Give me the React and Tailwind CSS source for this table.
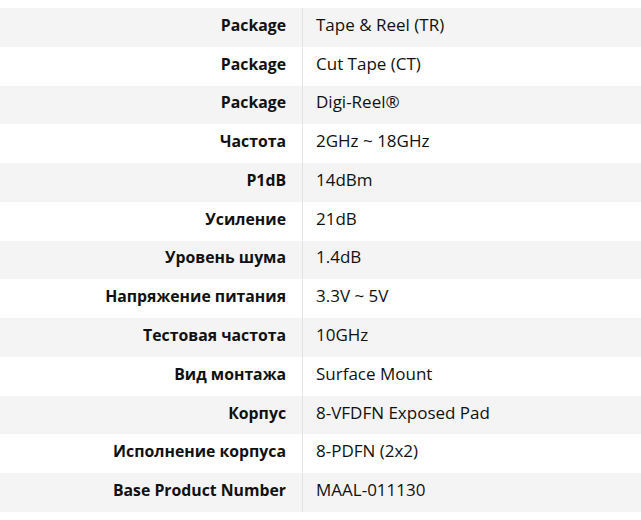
const rows = [
  ["Package", "Tape & Reel (TR)"],
  ["Package", "Cut Tape (CT)"],
  ["Package", "Digi-Reel®"],
  ["Частота", "2GHz ~ 18GHz"],
  ["P1dB", "14dBm"],
  ["Усиление", "21dB"],
  ["Уровень шума", "1.4dB"],
  ["Напряжение питания", "3.3V ~ 5V"],
  ["Тестовая частота", "10GHz"],
  ["Вид монтажа", "Surface Mount"],
  ["Корпус", "8-VFDFN Exposed Pad"],
  ["Исполнение корпуса", "8-PDFN (2x2)"],
  ["Base Product Number", "MAAL-011130"],
];

export default function App() {
  return (
    <div className="w-[641px] h-[520px] bg-white pt-[8px] font-['Open_Sans','Liberation_Sans',sans-serif] text-[#111]">
      <div className="flex flex-col">
        {rows.map(([label, value], i) => (
          <div
            key={i}
            className={`flex h-[38.77px] ${i % 2 === 0 ? "bg-[#f4f4f4]" : "bg-white"}`}
          >
            <div className="w-[302px] pr-[16px] pb-[5px] flex items-center justify-end text-[15.8px] leading-[24px] font-bold">
              {label}
            </div>
            <div className="w-px bg-[#e3e3e3]" />
            <div className="flex-1 pl-[13px] pb-[5px] flex items-center text-[17px] leading-[24px]">
              {value}
            </div>
          </div>
        ))}
      </div>
    </div>
  );
}
